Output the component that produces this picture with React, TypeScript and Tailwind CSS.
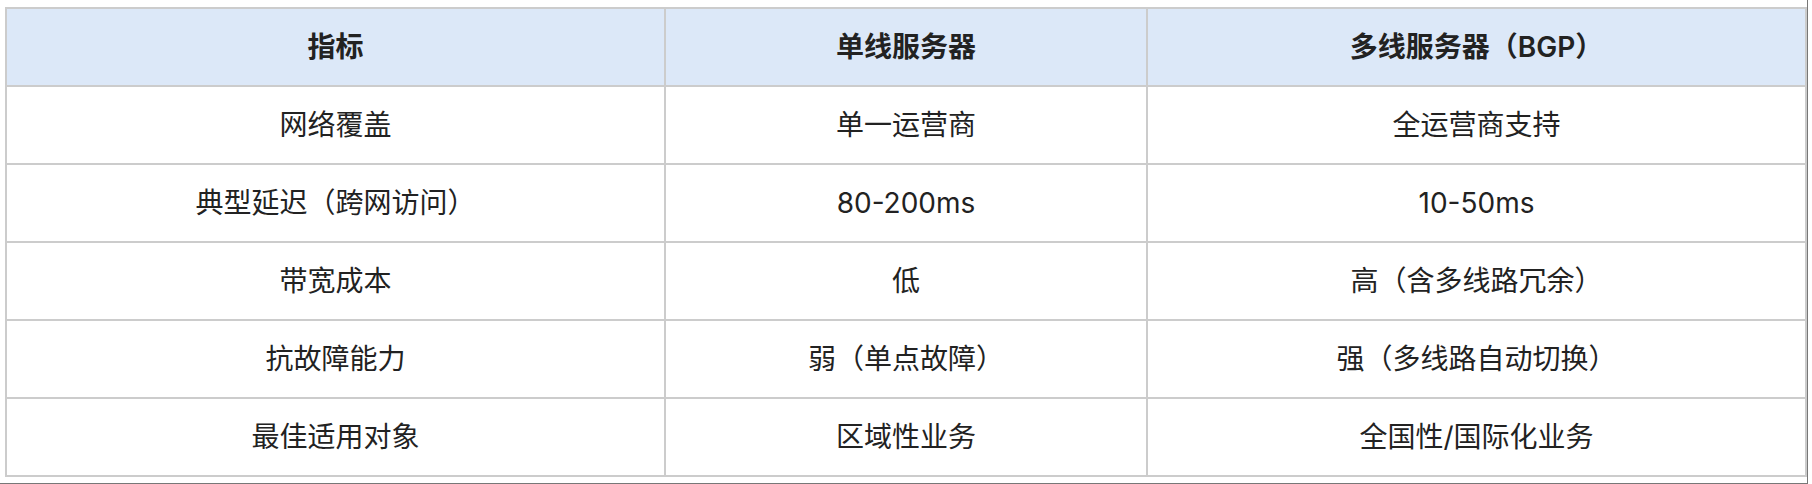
const headers = ["指标", "单线服务器", "多线服务器（BGP）"];

const rows = [
  ["网络覆盖", "单一运营商", "全运营商支持"],
  ["典型延迟（跨网访问）", "80-200ms", "10-50ms"],
  ["带宽成本", "低", "高（含多线路冗余）"],
  ["抗故障能力", "弱（单点故障）", "强（多线路自动切换）"],
  ["最佳适用对象", "区域性业务", "全国性/国际化业务"],
];

export default function App() {
  return (
    <div
      className="w-[1808px] h-[484px] bg-white border-r border-b border-[#777] pl-[5px] pt-[7px]"
      style={{ fontFamily: 'Inter, "Noto Sans CJK SC", sans-serif' }}
    >
      <table className="w-[1800px] table-fixed border-collapse border-2 border-[#cccccc] text-[28px] text-[#222]">
        <colgroup>
          <col className="w-[659px]" />
          <col className="w-[482px]" />
          <col className="w-[659px]" />
        </colgroup>
        <thead>
          <tr className="h-[78px] bg-[#dce8f8]">
            {headers.map((h) => (
              <th key={h} className="border-2 border-[#cccccc] p-0 text-center font-semibold">
                {h}
              </th>
            ))}
          </tr>
        </thead>
        <tbody>
          {rows.map((r) => (
            <tr key={r[0]} className="h-[78px]">
              {r.map((c, i) => (
                <td key={i} className="border-2 border-[#cccccc] p-0 text-center">
                  {c}
                </td>
              ))}
            </tr>
          ))}
        </tbody>
      </table>
    </div>
  );
}
